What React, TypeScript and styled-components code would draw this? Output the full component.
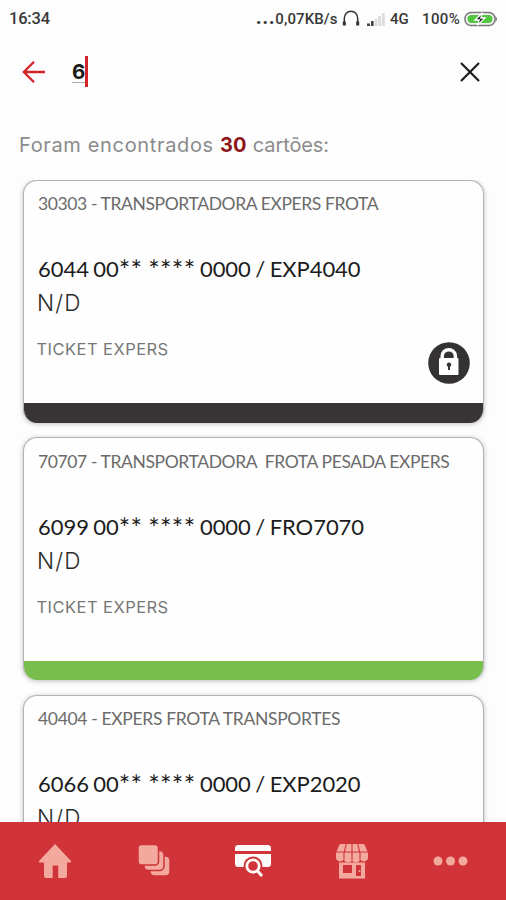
import React from "react";
import styled, { createGlobalStyle } from "styled-components";

const Global = createGlobalStyle`
  * { box-sizing: border-box; }
  body { margin: 0; background: #fdfdfd; }
  svg { display: block; flex: none; }
`;

const Screen = styled.div`
  width: 506px;
  height: 900px;
  display: flex;
  flex-direction: column;
  overflow: hidden;
  background: #fdfdfd;
  font-family: Inter, sans-serif;
`;

const StatusBar = styled.header`
  height: 38px;
  padding: 0 8px 0 9px;
  display: flex;
  align-items: center;
  justify-content: space-between;
  flex: none;
  font: 500 15px/38px Roboto, sans-serif;
  color: #383838;
`;

const Clock = styled.span`
  font-size: 16.5px;
  letter-spacing: -0.2px;
`;

const StatusIcons = styled.div`
  display: flex;
  align-items: center;
`;

const Label = styled.span<{ $width: number; $spacing?: number }>`
  width: ${(p) => p.$width}px;
  letter-spacing: ${(p) => p.$spacing ?? 0}px;
  white-space: nowrap;
`;

const Dots = styled.b`
  font-weight: 900;
  font-size: 18px;
  line-height: 0;
  letter-spacing: 1px;
`;

const SearchBar = styled.div`
  height: 68px;
  padding: 0 24px 0 22px;
  display: flex;
  align-items: center;
  flex: none;
`;

const Query = styled.div`
  flex: 1;
  display: flex;
  align-items: center;
  margin-left: 26px;
`;

const Typed = styled.span`
  height: 22px;
  border-bottom: 1px solid #aaa;
  font: 700 20.5px/22px Inter, sans-serif;
  color: #1b1b1b;
`;

const Caret = styled.span`
  width: 3px;
  height: 31px;
  margin-top: -2px;
  background: #d3242b;
`;

const Summary = styled.p`
  margin: 0;
  height: 73.5px;
  padding: 24px 0 0 19px;
  flex: none;
  font-size: 20px;
  line-height: 30px;
  color: #8b8b8b;
  letter-spacing: 0.65px;
  white-space: nowrap;
`;

const Count = styled.b`
  color: #8d1519;
  letter-spacing: 0;
`;

const Tail = styled.span`
  letter-spacing: -0.1px;
`;

const List = styled.main`
  flex: 1;
  min-height: 0;
  overflow: hidden;
  padding: 0 22px 0 23px;
  display: flex;
  flex-direction: column;
  gap: 14.5px;
`;

const CardBox = styled.article`
  height: 243px;
  flex: none;
  display: flex;
  flex-direction: column;
  border-radius: 14px;
  overflow: hidden;
  background: #fefefe;
  border: 1.5px solid #b3b3b3;
  border-bottom: 0;
  box-shadow: 0 1px 5px rgba(0, 0, 0, 0.26);
`;

const CardBody = styled.div`
  flex: 1;
  display: grid;
  grid-template-columns: 1fr auto;
  padding: 0 13px 0 14px;
`;

const Lines = styled.div`
  display: flex;
  flex-direction: column;
  white-space: pre;
`;

const Owner = styled.div<{ $spacing: number }>`
  height: 22px;
  margin-top: 12.5px;
  font: 400 17.5px/22px Lato, sans-serif;
  letter-spacing: ${(p) => p.$spacing}px;
  color: #6b6b6b;
`;

const Numbers = styled.div`
  height: 30px;
  margin-top: 39px;
  font: 400 22px/30px Lato, sans-serif;
  letter-spacing: -0.05px;
  word-spacing: -1.1px;
  color: #1c1c1c;
`;

const Mask = styled.span`
  font-size: 27px;
  line-height: 0;
  vertical-align: -3px;
  letter-spacing: 0.35px;
  word-spacing: -1.5px;
`;

const Driver = styled.div`
  height: 30px;
  margin-top: 4px;
  margin-left: -1px;
  font-size: 22.5px;
  line-height: 30px;
  font-weight: 300;
  letter-spacing: 1.2px;
  color: #2b2b2b;
`;

const Product = styled.div`
  height: 24px;
  margin-top: 19px;
  margin-left: -1.5px;
  font-size: 16.5px;
  line-height: 24px;
  letter-spacing: 0.45px;
  color: #777;
`;

const LockBadge = styled.div`
  align-self: end;
  margin-bottom: 19.5px;
`;

const Strip = styled.div<{ $color: string }>`
  height: 19.5px;
  margin: 0 -2px;
  background: ${(p) => p.$color};
`;

const NavBar = styled.nav`
  height: 78px;
  flex: none;
  display: flex;
  align-items: center;
  padding: 0 6px;
  background: #d03439;
`;

const NavItem = styled.button<{ $active?: boolean }>`
  flex: 1;
  height: 78px;
  padding: 0;
  border: 0;
  background: none;
  display: flex;
  align-items: center;
  justify-content: center;
  color: ${(p) => (p.$active ? "#fffafa" : "#f3a99d")};
`;

const HeadphonesIcon = () => (
  <svg width="18" height="18" viewBox="0 0 18 18" fill="none" stroke="#333">
    <path d="M2.3 14V8.5a6.7 7.3 0 0 1 13.4 0V14" strokeWidth="1.5" />
    <path d="M2.3 11.5v4M15.7 11.5v4" strokeWidth="3" />
  </svg>
);

const SignalIcon = () => (
  <svg width="20" height="16" viewBox="0 0 20 16">
    <path d="M1 12.5h3V15H1zM5 10h2.6v5H5z" fill="#444" />
    <path d="M8.6 8h2.6v7H8.6zM12.2 5h2.6v10h-2.6zM15.8 2h3v13h-3z" fill="#dcdcdc" />
  </svg>
);

const BatteryIcon = () => (
  <svg width="34" height="16" viewBox="0 0 34 16">
    <rect x="1" y="1.5" width="30" height="13" rx="6" fill="#f4f4f4" stroke="#777" strokeWidth="1.5" />
    <path d="M31.5 5q3 3 0 6z" fill="#777" />
    <rect x="3.5" y="4" width="25" height="8" rx="4" fill="#53c541" />
    <path d="M18.5 1.8 11 9h4.2l-1.8 5.4L21 7h-4.2z" fill="#222" stroke="#fff" strokeWidth="1.3" />
  </svg>
);

const BackIcon = () => (
  <svg width="24" height="24" viewBox="0 0 24 24" fill="none" stroke="#d32228" strokeWidth="2.3">
    <path d="M23 12H2M12 1.8 1.8 12 12 22.2" />
  </svg>
);

const CloseIcon = () => (
  <svg width="24" height="24" viewBox="0 0 24 24" fill="none" stroke="#1d1d1d" strokeWidth="2.2">
    <path d="M3 3l18 18M21 3 3 21" />
  </svg>
);

const LockIcon = () => (
  <svg width="42" height="42" viewBox="0 0 42 42">
    <circle cx="21" cy="21" r="20.8" fill="#353233" />
    <path d="M14.2 18v-4a6.6 6.3 0 0 1 13.2 0v4" fill="none" stroke="#fff" strokeWidth="3.4" />
    <rect x="11" y="16" width="19.5" height="17" rx="1" fill="#fff" />
    <path d="M21 20.5a2.2 2.2 0 0 1 1 4.2v3.3h-2v-3.3a2.2 2.2 0 0 1 1-4.2z" fill="#353233" />
  </svg>
);

const HomeIcon = () => (
  <svg width="34" height="35" viewBox="-1 0 34 35" fill="currentColor">
    <path d="M16 0 32 17q.6 1.5-1 1.5H28V32q0 2-2 2h-6.800V21.500h-5.500V34H7q-2 0-2-2V18.500H1q-1.600 0-1-1.500z" />
  </svg>
);

const StackIcon = () => (
  <svg width="33" height="32" viewBox="0 0 33 32">
    <g fill="currentColor" stroke="#d03439" strokeWidth="1.5">
      <rect x="12" y="11" width="20" height="20" rx="4.5" />
      <rect x="6" y="5.5" width="20" height="20" rx="4.5" />
      <rect x="0" y="-.5" width="20.5" height="20.5" rx="3.5" />
    </g>
  </svg>
);

const CardSearchIcon = () => (
  <svg width="38" height="34" viewBox="0 0 38 34">
    <path d="M4.5 1h29Q37 1 37 4v3H1V4q0-3 3.5-3zM1 10h36v9.500q0 3.500-3 3.500H4q-3 0-3-3.500z" fill="currentColor" />
    <circle cx="19" cy="22" r="9.5" fill="#d03439" />
    <circle cx="19" cy="22" r="6.2" fill="none" stroke="currentColor" strokeWidth="2.8" />
    <path d="m23.5 27 4.500 5" stroke="currentColor" strokeWidth="3" />
  </svg>
);

const StoreIcon = () => (
  <svg width="32" height="35" viewBox="0 0 32 35">
    <path d="M5 0h22q1.500 0 2 1.500L32 9v4a4.200 4.200 0 0 1-8 2 4.200 4.200 0 0 1-8 1 4.200 4.200 0 0 1-8-1 4.200 4.200 0 0 1-8-2V9l3-7.500Q3.500 0 5 0z" fill="currentColor" />
    <path d="M0 8h32M10.300 0 8 9v6M16 0v16M21.700 0 24 9v6" stroke="#d03439" strokeWidth="1.1" fill="none" />
    <path d="M3 18.500h26v16H3zm4 2.500v8h9v-8zm13 0v11h5V21z" fill="currentColor" fillRule="evenodd" />
    <circle cx="23.500" cy="27" r="1" fill="currentColor" />
  </svg>
);

const MoreIcon = () => (
  <svg width="36" height="10" viewBox="0 0 36 10" fill="currentColor">
    <circle cx="5" cy="5" r="4.5" />
    <circle cx="17.5" cy="5" r="4.5" />
    <circle cx="30" cy="5" r="4.5" />
  </svg>
);

interface CardData {
  owner: string;
  ownerSpacing: number;
  prefix: string;
  suffix: string;
  color: string;
  locked?: boolean;
}

const cards: CardData[] = [
  { owner: "30303 - TRANSPORTADORA EXPERS FROTA", ownerSpacing: -0.39, prefix: "6044 00", suffix: "0000 / EXP4040", color: "#383435", locked: true },
  { owner: "70707 - TRANSPORTADORA  FROTA PESADA EXPERS", ownerSpacing: -0.39, prefix: "6099 00", suffix: "0000 / FRO7070", color: "#77be4c" },
  { owner: "40404 - EXPERS FROTA TRANSPORTES", ownerSpacing: -0.33, prefix: "6066 00", suffix: "0000 / EXP2020", color: "#77be4c" },
];

const FleetCard = ({ card }: { card: CardData }) => (
  <CardBox>
    <CardBody>
      <Lines>
        <Owner $spacing={card.ownerSpacing}>{card.owner}</Owner>
        <Numbers>
          {card.prefix}
          <Mask>** ****</Mask> {card.suffix}
        </Numbers>
        <Driver>N/D</Driver>
        <Product>TICKET EXPERS</Product>
      </Lines>
      {card.locked && (
        <LockBadge>
          <LockIcon />
        </LockBadge>
      )}
    </CardBody>
    <Strip $color={card.color} />
  </CardBox>
);

export default function App() {
  return (
    <Screen>
      <Global />
      <StatusBar>
        <Clock>16:34</Clock>
        <StatusIcons>
          <Label $width={86} $spacing={0.1}>
            <Dots>...</Dots>0,07KB/s
          </Label>
          <HeadphonesIcon />
          <Label $width={6} />
          <SignalIcon />
          <Label $width={4} />
          <Label $width={32}>4G</Label>
          <Label $width={42} $spacing={0.4}>100%</Label>
          <BatteryIcon />
        </StatusIcons>
      </StatusBar>
      <SearchBar>
        <BackIcon />
        <Query>
          <Typed>6</Typed>
          <Caret />
        </Query>
        <CloseIcon />
      </SearchBar>
      <Summary>
        Foram encontrados <Count>30</Count> <Tail>cartões:</Tail>
      </Summary>
      <List>
        {cards.map((card) => (
          <FleetCard key={card.owner} card={card} />
        ))}
      </List>
      <NavBar>
        <NavItem><HomeIcon /></NavItem>
        <NavItem><StackIcon /></NavItem>
        <NavItem $active><CardSearchIcon /></NavItem>
        <NavItem><StoreIcon /></NavItem>
        <NavItem><MoreIcon /></NavItem>
      </NavBar>
    </Screen>
  );
}
